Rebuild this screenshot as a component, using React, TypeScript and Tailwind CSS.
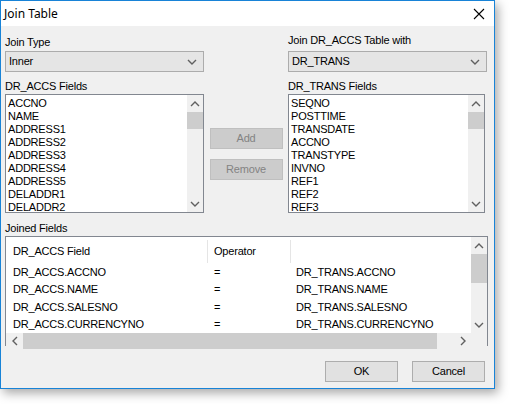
import React from "react";

const leftFields = ["ACCNO", "NAME", "ADDRESS1", "ADDRESS2", "ADDRESS3", "ADDRESS4", "ADDRESS5", "DELADDR1", "DELADDR2"];
const rightFields = ["SEQNO", "POSTTIME", "TRANSDATE", "ACCNO", "TRANSTYPE", "INVNO", "REF1", "REF2", "REF3"];
const joined = [
  ["DR_ACCS.ACCNO", "=", "DR_TRANS.ACCNO"],
  ["DR_ACCS.NAME", "=", "DR_TRANS.NAME"],
  ["DR_ACCS.SALESNO", "=", "DR_TRANS.SALESNO"],
  ["DR_ACCS.CURRENCYNO", "=", "DR_TRANS.CURRENCYNO"],
];

function Chevron({ dir = "down", className = "" }: { dir?: "down" | "up" | "left" | "right"; className?: string }) {
  const d = {
    down: "M1 3 L5 7 L9 3",
    up: "M1 7 L5 3 L9 7",
    left: "M7 1 L3 5 L7 9",
    right: "M3 1 L7 5 L3 9",
  }[dir];
  return (
    <svg width="10" height="10" viewBox="0 0 10 10" className={className}>
      <path d={d} fill="none" stroke="currentColor" strokeWidth="1.4" />
    </svg>
  );
}

function Select({ value }: { value: string }) {
  return (
    <div className="flex h-[21px] items-center justify-between border border-[#acacac] bg-[#e5e5e5] pl-[3px] pr-[6px]">
      <span>{value}</span>
      <Chevron className="text-[#606060]" />
    </div>
  );
}

function VScroll() {
  return (
    <div className="flex w-[16px] flex-col bg-[#f0f0f0]">
      <div className="flex h-[17px] items-center justify-center text-[#606060]">
        <Chevron dir="up" />
      </div>
      <div className="h-[17px] bg-[#cdcdcd]" />
      <div className="flex-1" />
      <div className="flex h-[17px] items-center justify-center text-[#606060]">
        <Chevron dir="down" />
      </div>
    </div>
  );
}

function FieldList({ items }: { items: string[] }) {
  return (
    <div className="flex h-[119px] border border-[#828790] bg-white">
      <div className="flex-1 overflow-hidden pl-[2px] pt-[2px]">
        {items.map((f) => (
          <div key={f} className="h-[13px] leading-[13px]">{f}</div>
        ))}
      </div>
      <VScroll />
    </div>
  );
}

function Button({ children, disabled = false }: { children: React.ReactNode; disabled?: boolean }) {
  return (
    <div
      className={
        disabled
          ? "flex h-[21px] w-[73px] items-center justify-center border border-[#bfbfbf] bg-[#cccccc] text-[#838383]"
          : "flex h-[21px] w-[73px] items-center justify-center border border-[#adadad] bg-[#e1e1e1] text-black"
      }
    >
      {children}
    </div>
  );
}

export default function App() {
  return (
    <div className="h-[404px] w-[510px] bg-white" style={{ fontFamily: '"Liberation Sans", Arial, sans-serif' }}>
      <div className="flex h-[389px] w-[495px] flex-col border border-[#1883d7] bg-[#f0f0f0] text-[11px] tracking-[-0.2px] text-black shadow-[3px_4px_10px_rgba(0,0,0,0.35)]">
        {/* Title bar */}
        <div className="flex h-[25px] shrink-0 items-center justify-between bg-white pl-[3px] pr-[9px]">
          <span className="text-[12px] tracking-normal" style={{ fontFamily: '"Noto Sans", "Open Sans", sans-serif' }}>Join Table</span>
          <svg width="12" height="12" viewBox="0 0 12 12">
            <path d="M1 1 L11 11 M11 1 L1 11" stroke="#000" strokeWidth="1.1" />
          </svg>
        </div>

        <div className="flex flex-col pl-[4px] pr-[6px]">
          {/* Join type row */}
          <div className="mt-[8px] grid grid-cols-[199px_84px_199px]">
            <div className="flex flex-col">
              <div className="mt-[2px] h-[13px] leading-[13px]">Join Type</div>
              <div className="mt-[2px]"><Select value="Inner" /></div>
            </div>
            <div />
            <div className="flex flex-col">
              <div className="h-[13px] leading-[13px]">Join DR_ACCS Table with</div>
              <div className="mt-[4px]"><Select value="DR_TRANS" /></div>
            </div>
          </div>

          {/* Field lists */}
          <div className="mt-[8px] grid grid-cols-[199px_84px_197px]">
            <div className="flex flex-col">
              <div className="h-[13px] leading-[13px]">DR_ACCS Fields</div>
              <div className="mt-[1px]"><FieldList items={leftFields} /></div>
            </div>
            <div className="flex flex-col items-center gap-[10px] pt-[48px]">
              <Button disabled>Add</Button>
              <Button disabled>Remove</Button>
            </div>
            <div className="flex flex-col">
              <div className="h-[13px] leading-[13px]">DR_TRANS Fields</div>
              <div className="mt-[1px]"><FieldList items={rightFields} /></div>
            </div>
          </div>

          {/* Joined fields */}
          <div className="mt-[9px] h-[13px] leading-[13px]">Joined Fields</div>
          <div className="mt-[1px] flex h-[110px] w-[483px] flex-col border border-[#828790] bg-white">
            <div className="flex flex-1">
              <div className="flex-1 overflow-hidden">
                <div className="flex h-[26px] items-center pt-[2px]">
                  <div className="w-[201px] pl-[7px]">DR_ACCS Field</div>
                  <div className="h-[23px] w-px bg-[#e5e5e5]" />
                  <div className="w-[82px] pl-[6px]">Operator</div>
                  <div className="h-[23px] w-px bg-[#e5e5e5]" />
                </div>
                {joined.map((r) => (
                  <div key={r[0]} className="flex h-[17.5px] items-center">
                    <div className="w-[202px] pl-[7px]">{r[0]}</div>
                    <div className="w-[83px] pl-[6px]">{r[1]}</div>
                    <div className="pl-[5px]">{r[2]}</div>
                  </div>
                ))}
              </div>
              <div className="flex w-[16px] flex-col bg-[#f0f0f0]">
                <div className="flex h-[17px] items-center justify-center text-[#606060]">
                  <Chevron dir="up" />
                </div>
                <div className="h-[29px] bg-[#cdcdcd]" />
                <div className="flex-1" />
                <div className="flex h-[17px] items-center justify-center text-[#606060]">
                  <Chevron dir="down" />
                </div>
              </div>
            </div>
            <div className="flex h-[16px] shrink-0 bg-[#f0f0f0]">
              <div className="flex w-[17px] items-center justify-center text-[#606060]">
                <Chevron dir="left" />
              </div>
              <div className="w-[414px] bg-[#cdcdcd]" />
              <div className="flex-1" />
              <div className="flex w-[17px] items-center justify-center text-[#606060]">
                <Chevron dir="right" />
              </div>
              <div className="w-[16px]" />
            </div>
          </div>

          {/* OK / Cancel */}
          <div className="mt-[15px] flex justify-end gap-[14px] pr-[3px]">
            <Button>OK</Button>
            <Button>Cancel</Button>
          </div>
        </div>
      </div>
    </div>
  );
}
